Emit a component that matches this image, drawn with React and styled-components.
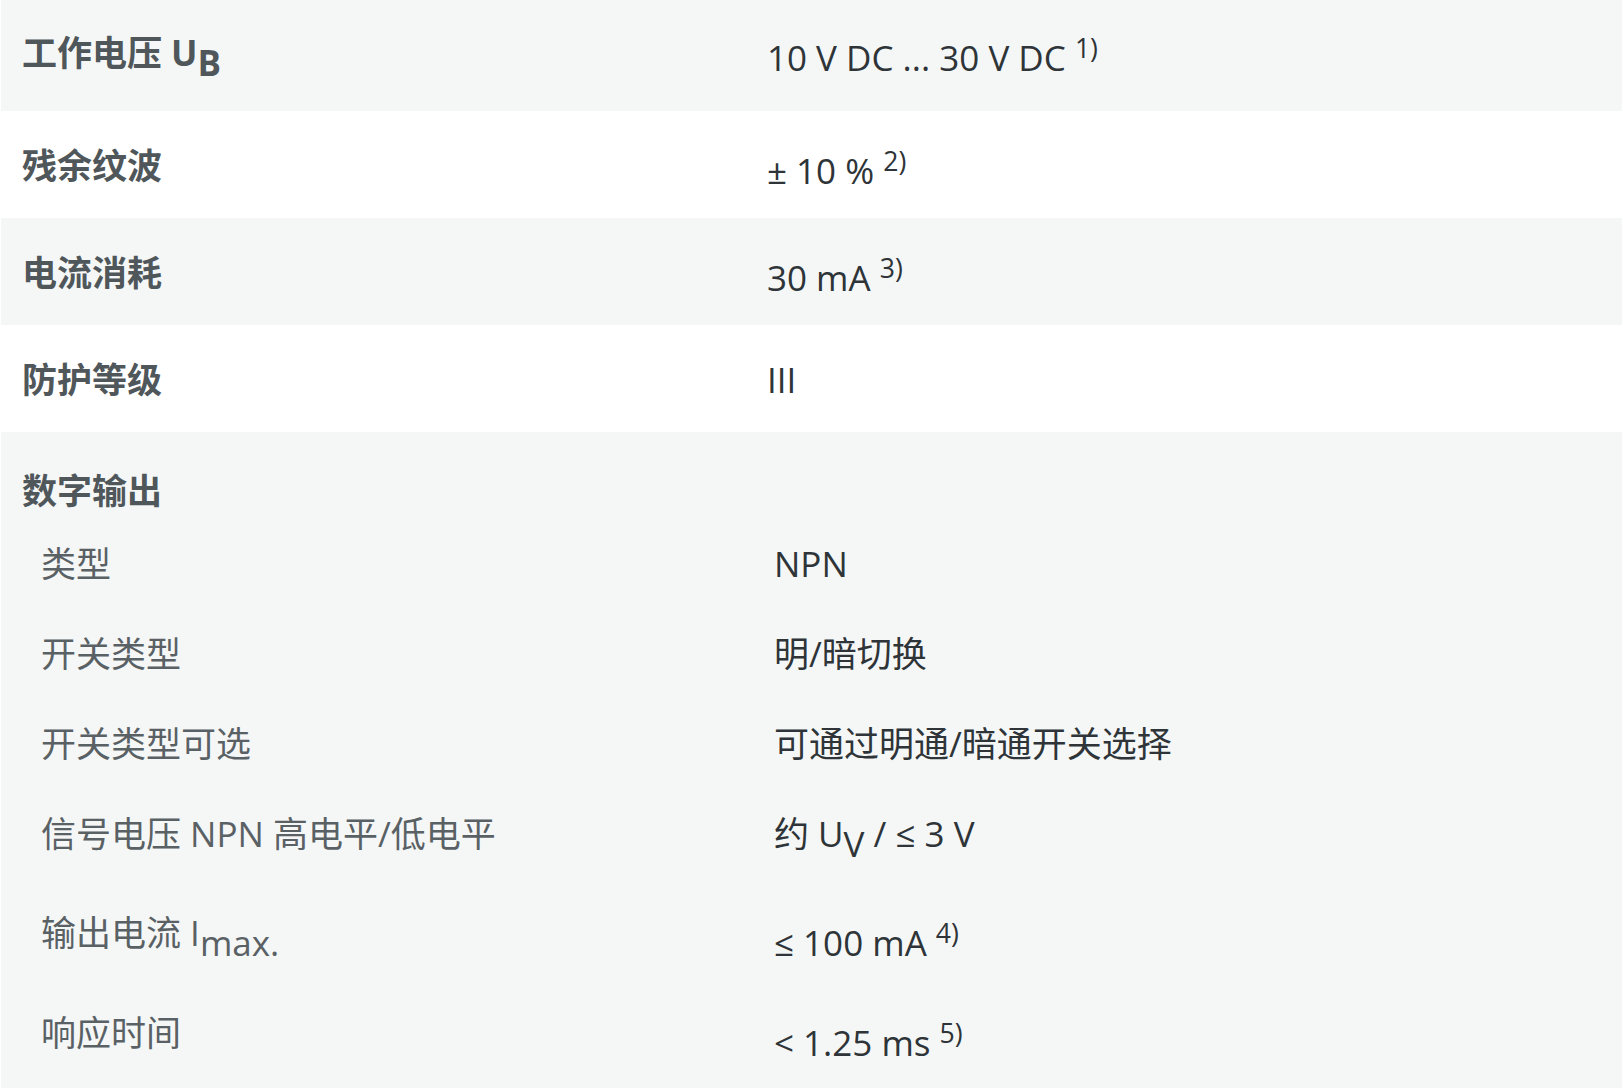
import React from "react";
import styled, { createGlobalStyle } from "styled-components";

const GlobalStyle = createGlobalStyle`
  html, body {
    margin: 0;
    padding: 0;
    background: #ffffff;
  }
  body {
    font-family: "Open Sans", "Noto Sans CJK SC", sans-serif;
    font-size: 35px;
    -webkit-font-smoothing: antialiased;
  }
`;

const Sup = styled.sup`
  font-size: 0.76em;
  vertical-align: 0.5em;
`;

const Sub = styled.sub`
  font-size: 1em;
  vertical-align: -0.28em;
`;

const Sheet = styled.div`
  margin-top: -2px;
  padding: 0 1px;
  display: flex;
  flex-direction: column;
`;

const Row = styled.div`
  box-sizing: border-box;
  min-height: 107px;
  display: grid;
  grid-template-columns: 745px 1fr;
  align-items: start;
  padding: 26px 21px 18px;
  line-height: 57px;
  background: ${(props) => (props.$shaded ? "#f5f7f7" : "#ffffff")};

  ${Sup} {
    line-height: 48px;
  }
  ${Sub} {
    line-height: 61px;
  }
`;

const Label = styled.div`
  font-weight: 700;
  color: #50575b;
`;

const Value = styled.div`
  color: #2e3437;
`;

const Group = styled.div`
  background: #f5f7f7;
  padding: 33px 21px 40px;
`;

const GroupTitle = styled.div`
  font-weight: 700;
  color: #50575b;
  line-height: 51px;
  margin-bottom: 3px;
`;

const SubRow = styled.div`
  display: grid;
  grid-template-columns: 733px 1fr;
  padding: 22px 0 22px 19px;
  line-height: 46px;

  ${Sup} {
    line-height: 46px;
  }
  ${Sub} {
    line-height: 45px;
  }
`;

const SubLabel = styled.div`
  color: #5a6165;
`;

const SubValue = styled.div`
  color: #2e3437;
`;

const mainRows = [
  {
    label: (
      <>
        工作电压 U<Sub>B</Sub>
      </>
    ),
    value: (
      <>
        10 V DC ... 30 V DC <Sup>1)</Sup>
      </>
    ),
  },
  {
    label: "残余纹波",
    value: (
      <>
        ± 10 % <Sup>2)</Sup>
      </>
    ),
  },
  {
    label: "电流消耗",
    value: (
      <>
        30 mA <Sup>3)</Sup>
      </>
    ),
  },
  { label: "防护等级", value: "III" },
];

const outputRows = [
  { label: "类型", value: "NPN" },
  { label: "开关类型", value: "明/暗切换" },
  { label: "开关类型可选", value: "可通过明通/暗通开关选择" },
  {
    label: "信号电压 NPN 高电平/低电平",
    value: (
      <>
        约 U<Sub>V</Sub> / ≤ 3 V
      </>
    ),
  },
  {
    label: (
      <>
        输出电流 I<Sub>max.</Sub>
      </>
    ),
    value: (
      <>
        ≤ 100 mA <Sup>4)</Sup>
      </>
    ),
  },
  {
    label: "响应时间",
    value: (
      <>
        &lt; 1.25 ms <Sup>5)</Sup>
      </>
    ),
  },
];

const App = () => {
  return (
    <>
      <GlobalStyle />
      <Sheet>
        {mainRows.map((row, index) => (
          <Row key={index} $shaded={index % 2 === 0}>
            <Label>{row.label}</Label>
            <Value>{row.value}</Value>
          </Row>
        ))}
        <Group>
          <GroupTitle>数字输出</GroupTitle>
          {outputRows.map((row, index) => (
            <SubRow key={index}>
              <SubLabel>{row.label}</SubLabel>
              <SubValue>{row.value}</SubValue>
            </SubRow>
          ))}
        </Group>
      </Sheet>
    </>
  );
};

export default App;
